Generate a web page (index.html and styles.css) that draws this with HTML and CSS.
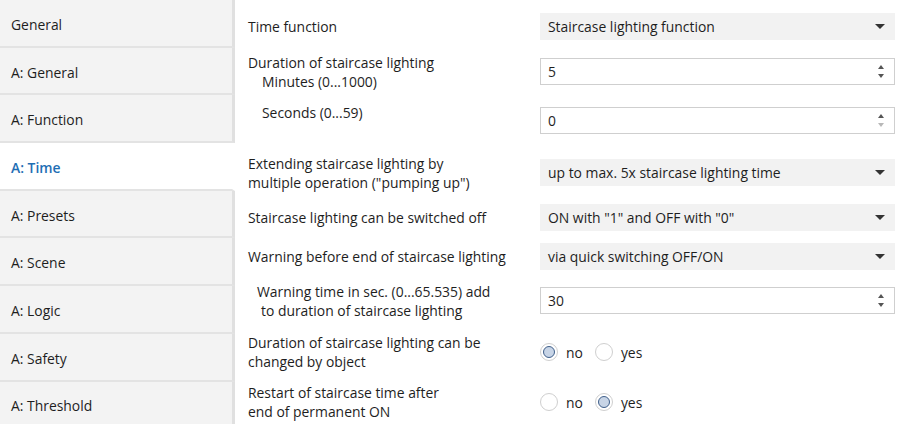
FILE: index.html
```html
<!DOCTYPE html>
<html>
<head>
<meta charset="utf-8">
<link rel="stylesheet" href="styles.css">
</head>
<body>
<div class="app">
  <nav class="sidebar">
    <div class="nav-item">General</div>
    <div class="nav-item">A: General</div>
    <div class="nav-item">A: Function</div>
    <div class="nav-item active">A: Time</div>
    <div class="nav-item">A: Presets</div>
    <div class="nav-item">A: Scene</div>
    <div class="nav-item">A: Logic</div>
    <div class="nav-item">A: Safety</div>
    <div class="nav-item">A: Threshold</div>
  </nav>
  <main class="content">
    <div class="row r1">
      <div class="label">Time function</div>
      <div class="select"><span>Staircase lighting function</span><i class="caret"></i></div>
    </div>
    <div class="row r2">
      <div class="label">Duration of staircase lighting<br><span class="ind1">Minutes (0...1000)</span></div>
      <div class="spin"><span>5</span><div class="arrows"><i class="up"></i><i class="down"></i></div></div>
    </div>
    <div class="row r3">
      <div class="label top"><span class="ind1">Seconds (0...59)</span></div>
      <div class="spin"><span>0</span><div class="arrows"><i class="up"></i><i class="down dis"></i></div></div>
    </div>
    <div class="row r4">
      <div class="label">Extending staircase lighting by<br>multiple operation ("pumping up")</div>
      <div class="select"><span>up to max. 5x staircase lighting time</span><i class="caret"></i></div>
    </div>
    <div class="row r5">
      <div class="label">Staircase lighting can be switched off</div>
      <div class="select"><span>ON with "1" and OFF with "0"</span><i class="caret"></i></div>
    </div>
    <div class="row r6">
      <div class="label">Warning before end of staircase lighting</div>
      <div class="select"><span>via quick switching OFF/ON</span><i class="caret"></i></div>
    </div>
    <div class="row r7">
      <div class="label"><span class="ind2">Warning time in sec. (0...65.535) add</span><br><span class="ind3">to duration of staircase lighting</span></div>
      <div class="spin"><span>30</span><div class="arrows"><i class="up"></i><i class="down"></i></div></div>
    </div>
    <div class="row r8">
      <div class="label">Duration of staircase lighting can be<br>changed by object</div>
      <div class="radios">
        <label class="radio"><i class="dot on"></i>no</label>
        <label class="radio"><i class="dot"></i>yes</label>
      </div>
    </div>
    <div class="row r9">
      <div class="label">Restart of staircase time after<br>end of permanent ON</div>
      <div class="radios">
        <label class="radio"><i class="dot"></i>no</label>
        <label class="radio"><i class="dot on"></i>yes</label>
      </div>
    </div>
  </main>
</div>
</body>
</html>
```
FILE: styles.css
```css
* { box-sizing: border-box; }
html, body { margin: 0; padding: 0; }
body {
  width: 900px;
  height: 424px;
  overflow: hidden;
  background: #fff;
  font-family: "Open Sans", "Noto Sans", sans-serif;
  font-size: 13.9px;
  color: #1e1e1e;
}
.app { display: flex; height: 424px; }
.sidebar {
  width: 235px;
  flex: none;
  background: #f3f3f3;
  display: flex;
  flex-direction: column;
}
.nav-item {
  height: 47.7px;
  flex: none;
  display: flex;
  align-items: center;
  padding-left: 11px;
  padding-top: 3px;
  border-bottom: 2px solid #e3e3e3;
  border-right: 3px solid #e0e0e0;
}
.nav-item.active {
  background: #fff;
  color: #1e6eb4;
  border-right-color: #fff;
  font-weight: 600;
}
.content {
  flex: 1;
  padding: 5px 5px 0 13px;
  display: flex;
  flex-direction: column;
}
.row {
  display: flex;
  align-items: center;
  flex: none;
}
.r1 { height: 43px; }
.r2 { height: 47px; }
.r3 { height: 51px; }
.r4 { height: 53px; }
.r5 { height: 37px; }
.r6 { height: 41px; }
.r7 { height: 47px; }
.r8 { height: 56px; }
.r9 { height: 44px; }
.label {
  width: 292px;
  flex: none;
  line-height: 19px;
}
.label.top { align-self: flex-start; padding-top: 8px; }
.ind1 { padding-left: 14px; }
.ind2 { padding-left: 9px; }
.ind3 { padding-left: 13px; }
.select {
  width: 355px;
  height: 27px;
  background: #f2f2f2;
  display: flex;
  align-items: center;
  justify-content: space-between;
  padding: 0 10px 0 8px;
}
.caret {
  width: 0; height: 0;
  border-left: 5px solid transparent;
  border-right: 5px solid transparent;
  border-top: 5px solid #333;
}
.spin {
  width: 355px;
  height: 27px;
  background: #fff;
  border: 1px solid #cfcfcf;
  display: flex;
  align-items: center;
  justify-content: space-between;
  padding: 0 10px 0 7px;
}
.arrows {
  display: flex;
  flex-direction: column;
  gap: 5px;
}
.arrows .up {
  width: 0; height: 0;
  border-left: 3.5px solid transparent;
  border-right: 3.5px solid transparent;
  border-bottom: 4px solid #555;
}
.arrows .down {
  width: 0; height: 0;
  border-left: 3.5px solid transparent;
  border-right: 3.5px solid transparent;
  border-top: 4px solid #555;
}
.arrows .down.dis { border-top-color: #b8b8b8; }
.radios {
  display: flex;
  align-items: center;
  gap: 12px;
}
.radio {
  display: flex;
  align-items: center;
  gap: 8px;
}
.dot {
  width: 18px; height: 18px;
  border-radius: 50%;
  border: 1px solid #cfcfcf;
  background: #fff;
  display: block;
  position: relative;
}
.dot.on::after {
  content: "";
  position: absolute;
  left: 2px; top: 2px;
  width: 12px; height: 12px;
  border-radius: 50%;
  border: 1.5px solid #3f5f8a;
  background: #c7d4e6;
  box-sizing: border-box;
}
```
